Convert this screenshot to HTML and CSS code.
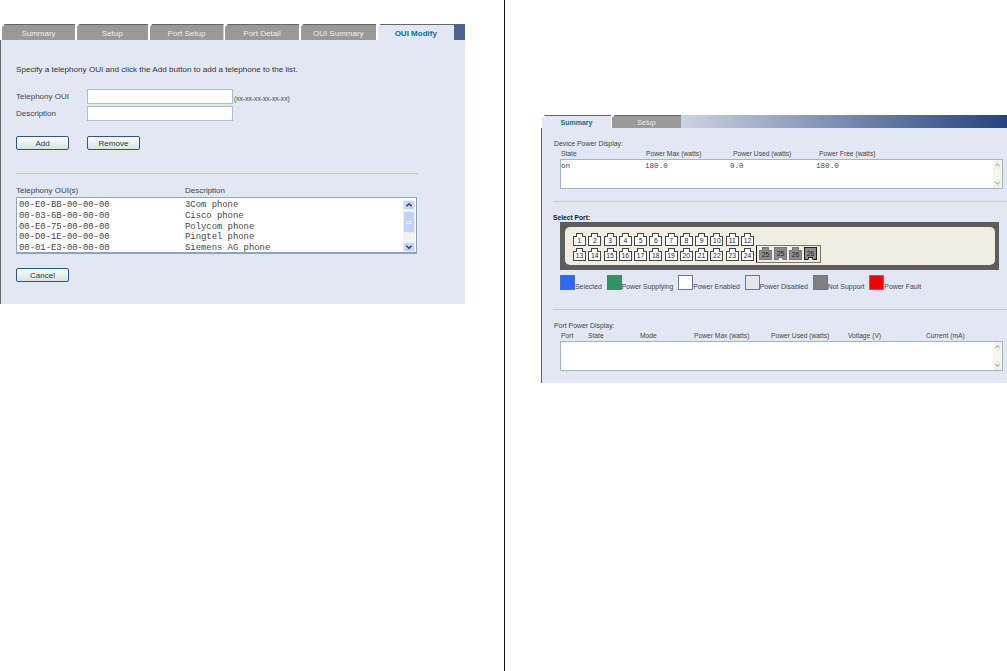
FILE: index.html
```html
<!DOCTYPE html>
<html lang="en">
<head>
    <meta charset="UTF-8">
    <title>PoE and OUI settings</title>
    <link rel="stylesheet" href="styles.css">
</head>
<body>
    <svg class="defs" width="0" height="0">
        <symbol id="arrow-up" viewBox="0 0 9 9"><path d="M1.5 6 4.5 3 7.5 6" fill="none" stroke="currentColor" stroke-width="1.6"/></symbol>
        <symbol id="arrow-down" viewBox="0 0 9 9"><path d="M1.5 3 4.5 6 7.5 3" fill="none" stroke="currentColor" stroke-width="1.6"/></symbol>
    </svg>

    <div class="column column-left">
        <div class="tabs">
            <div class="tab tab-w1">Summary</div>
            <div class="tab tab-w2">Setup</div>
            <div class="tab tab-w3">Port Setup</div>
            <div class="tab tab-w3">Port Detail</div>
            <div class="tab tab-w4">OUI Summary</div>
            <div class="tab tab-w5 active">OUI Modify</div>
            <div class="tabs-fill"></div>
        </div>
        <div class="panel panel-oui">
            <p class="intro">Specify a telephony OUI and click the Add button to add a telephone to the list.</p>
            <div class="form-grid">
                <label>Telephony OUI</label>
                <input type="text">
                <span class="hint">(xx-xx-xx-xx-xx-xx)</span>
                <label>Description</label>
                <input type="text">
            </div>
            <div class="button-row">
                <button>Add</button>
                <button>Remove</button>
            </div>
            <hr class="sep sep-left">
            <div class="list-head">
                <span>Telephony OUI(s)</span>
                <span>Description</span>
            </div>
            <div class="listbox listbox-oui">
                <div class="list-rows">
                    <div class="oui-row"><span>00-E0-BB-00-00-00</span><span>3Com phone</span></div>
                    <div class="oui-row"><span>00-03-6B-00-00-00</span><span>Cisco phone</span></div>
                    <div class="oui-row"><span>00-E0-75-00-00-00</span><span>Polycom phone</span></div>
                    <div class="oui-row"><span>00-D0-1E-00-00-00</span><span>Pingtel phone</span></div>
                    <div class="oui-row"><span>00-01-E3-00-00-00</span><span>Siemens AG phone</span></div>
                </div>
                <div class="scrollbar">
                    <div class="sb-btn"><svg><use href="#arrow-up"/></svg></div>
                    <div class="sb-thumb"><i></i><i></i></div>
                    <div class="sb-track"></div>
                    <div class="sb-btn"><svg><use href="#arrow-down"/></svg></div>
                </div>
            </div>
            <button class="cancel">Cancel</button>
        </div>
    </div>

    <div class="column column-right">
        <div class="tabs tabs-small">
            <div class="tab tab-s active">Summary</div>
            <div class="tab tab-s">Setup</div>
            <div class="tabs-gradient"></div>
        </div>
        <div class="panel panel-power">
            <div class="group-title">Device Power Display:</div>
            <div class="power-head device-cols">
                <span>State</span>
                <span>Power Max (watts)</span>
                <span>Power Used (watts)</span>
                <span>Power Free (watts)</span>
            </div>
            <div class="listbox listbox-power">
                <div class="list-rows">
                    <div class="device-cols mono-row">
                        <span>on</span>
                        <span>180.0</span>
                        <span>0.0</span>
                        <span>180.0</span>
                    </div>
                </div>
                <div class="scrollbar off">
                    <div class="sb-btn"><svg><use href="#arrow-up"/></svg></div>
                    <div class="sb-track"></div>
                    <div class="sb-btn"><svg><use href="#arrow-down"/></svg></div>
                </div>
            </div>
            <hr class="sep sep-top">
            <div class="select-title">Select Port:</div>
            <div class="switch">
                <div class="switch-inner">
                    <div class="port-grid">
                        <div class="port">1</div><div class="port">2</div><div class="port">3</div><div class="port">4</div>
                        <div class="port">5</div><div class="port">6</div><div class="port">7</div><div class="port">8</div>
                        <div class="port">9</div><div class="port">10</div><div class="port">11</div><div class="port">12</div>
                        <div class="port">13</div><div class="port">14</div><div class="port">15</div><div class="port">16</div>
                        <div class="port">17</div><div class="port">18</div><div class="port">19</div><div class="port">20</div>
                        <div class="port">21</div><div class="port">22</div><div class="port">23</div><div class="port">24</div>
                    </div>
                    <div class="uplinks">
                        <div class="port grey">25</div>
                        <div class="port grey down">25</div>
                        <div class="port grey">26</div>
                        <div class="port grey down dark">26</div>
                    </div>
                </div>
            </div>
            <div class="legend">
                <div class="legend-item"><span class="swatch c-selected"></span>Selected</div>
                <div class="legend-item"><span class="swatch c-supply"></span>Power Supplying</div>
                <div class="legend-item"><span class="swatch c-enabled"></span>Power Enabled</div>
                <div class="legend-item"><span class="swatch c-disabled"></span>Power Disabled</div>
                <div class="legend-item"><span class="swatch c-none"></span>Not Support</div>
                <div class="legend-item"><span class="swatch c-fault"></span>Power Fault</div>
            </div>
            <hr class="sep sep-bottom">
            <div class="group-title">Port Power Display:</div>
            <div class="power-head port-cols">
                <span>Port</span>
                <span>State</span>
                <span>Mode</span>
                <span>Power Max (watts)</span>
                <span>Power Used (watts)</span>
                <span>Voltage (V)</span>
                <span>Current (mA)</span>
            </div>
            <div class="listbox listbox-power">
                <div class="list-rows"></div>
                <div class="scrollbar off">
                    <div class="sb-btn"><svg><use href="#arrow-up"/></svg></div>
                    <div class="sb-track"></div>
                    <div class="sb-btn"><svg><use href="#arrow-down"/></svg></div>
                </div>
            </div>
        </div>
    </div>
</body>
</html>
```

FILE: styles.css
```css
* {
    box-sizing: border-box;
}
body {
    margin: 0;
    height: 671px;
    display: flex;
    overflow: hidden;
    background: #fff;
    font-family: "Liberation Sans", Arial, sans-serif;
    font-size: 8px;
    color: #444;
}
.defs {
    position: absolute;
}
.column-left {
    width: 505px;
    height: 671px;
    padding-top: 24px;
    border-right: 1px solid #111;
}
.column-right {
    flex: 1;
    padding: 115px 0 0 36px;
}

/* tabs */
.tabs {
    display: flex;
    height: 16px;
    width: 465px;
    padding-left: 2px;
    gap: 1.5px;
}
.tab {
    height: 16px;
    line-height: 17px;
    text-align: center;
    color: #eee;
    background: #999;
    border-top: 1px solid #666;
    clip-path: polygon(3px 0, 100% 0, 100% 100%, 0 100%, 0 3px);
}
.tab-w1 { width: 73px; }
.tab-w2 { width: 71.5px; }
.tab-w3 { width: 74px; }
.tab-w4 { width: 75.5px; }
.tab-w5 { width: 76.5px; }
.tab.active {
    background: #e1e8f3;
    color: #0f6aa6;
    font-weight: bold;
}
.tabs-fill {
    flex: 1;
    margin-left: -1.5px;
    background: #4a6296;
}
.tabs-small {
    width: 466px;
    height: 13px;
    padding-left: 1px;
    gap: 1px;
}
.tab-s {
    width: 69px;
    height: 13px;
    line-height: 13px;
    font-size: 7px;
}
.tabs-gradient {
    flex: 1;
    margin-left: -1px;
    background: linear-gradient(to right, #ccd3e1, #26437e);
}

/* panels */
.panel {
    background: #e1e8f3;
    border-left: 1px solid #666;
}
.panel-oui {
    width: 465px;
    height: 264px;
    padding: 25px 0 0 15px;
}
.panel-power {
    width: 466px;
    height: 255px;
    padding: 12px 0 0 11px;
    font-size: 6.7px;
}
.intro {
    margin: 0 0 14px;
    line-height: 10px;
    font-size: 8.1px;
    color: #333;
}
.form-grid {
    display: grid;
    grid-template-columns: 71px 146px auto;
    grid-auto-rows: 15px;
    row-gap: 2px;
    align-items: center;
}
.form-grid input {
    width: 146px;
    height: 15px;
    padding: 0 2px;
    border: 1px solid #a5bdd6;
    background: #fff;
}
.hint {
    font-size: 6.7px;
    padding-left: 1px;
    padding-top: 3px;
}
.button-row {
    display: flex;
    gap: 18px;
    margin-top: 15px;
}
button {
    width: 53px;
    height: 14px;
    padding: 0;
    border: 1px solid #235a8c;
    border-radius: 2px;
    background: linear-gradient(#fdfdfd, #dde2de);
    font-family: inherit;
    font-size: 8px;
    color: #333;
}
.sep {
    height: 1px;
    margin: 0;
    border: 0;
    background: #c9ccbb;
}
.sep-left {
    width: 402px;
    margin-top: 23px;
}

/* lists */
.list-head {
    display: grid;
    grid-template-columns: 169px auto;
    margin: 12px 0 1px;
    line-height: 10px;
}
.listbox {
    display: flex;
    background: #fff;
    border: 1px solid #8aa5c2;
}
.listbox-oui {
    width: 401px;
    height: 57px;
    padding: 2px 0 0 2px;
    border-bottom-width: 2px;
}
.list-rows {
    flex: 1;
    font-family: "Liberation Mono", "Courier New", monospace;
    font-size: 8.9px;
    color: #444;
}
.oui-row {
    display: grid;
    grid-template-columns: 166px auto;
    height: 10.8px;
    line-height: 10.8px;
}
.scrollbar {
    width: 12px;
    margin-right: 1px;
    display: flex;
    flex-direction: column;
    background: #f4f4ec;
}
.sb-btn {
    height: 10px;
    background: #c5d5f9;
    border: 1px solid #e8eefc;
    color: #2c3f74;
}
.sb-btn svg {
    display: block;
    width: 10px;
    height: 8px;
}
.sb-thumb {
    height: 22px;
    margin-top: 1px;
    padding-top: 9px;
    background: #c1d1f8;
    border: 1px solid #e8eefc;
}
.sb-thumb i {
    display: block;
    width: 6px;
    height: 1px;
    margin: 0 auto 1px;
    background: #eef3ff;
}
.sb-track {
    flex: 1;
}
.cancel {
    display: block;
    margin: 14px 0 0;
}

/* power tab */
.group-title {
    line-height: 8px;
    padding-left: 1px;
    font-size: 6.9px;
}
.power-head {
    line-height: 8px;
    margin: 2px 0 1px;
}
.device-cols {
    display: grid;
    grid-template-columns: 85px 87px 86px auto;
    padding-left: 8px;
}
.port-cols {
    display: grid;
    grid-template-columns: 27px 52px 54px 77px 77px 78px auto;
    padding-left: 8px;
}
.listbox-power {
    width: 443px;
    height: 30px;
    margin-left: 7px;
    border-color: #9db4cb;
}
.listbox-power .list-rows {
    font-size: 7.6px;
}
.mono-row {
    padding-left: 0;
    margin-top: 2px;
    line-height: 9px;
    grid-template-columns: 84px 85px 86px auto;
}
.scrollbar.off {
    width: 9px;
    margin-right: 0;
    background: #f7f7f2;
}
.scrollbar.off .sb-btn {
    background: #f1f1ea;
    border-color: #f7f7f2;
    color: #b9bdb6;
}
.scrollbar.off .sb-btn svg {
    width: 7px;
}
.sep-top {
    margin-top: 12px;
}
.select-title {
    margin-top: 12px;
    line-height: 8px;
    font-weight: bold;
    color: #222;
}

/* switch faceplate */
.switch {
    width: 439px;
    height: 48px;
    margin: 0 0 0 7px;
    padding: 5px 4px 5px 5px;
    background: #5d5d5d;
}
.switch-inner {
    display: flex;
    align-items: flex-start;
    height: 38px;
    padding: 6px 0 0 8px;
    background: #f0eee1;
    border-radius: 5px;
}
.port-grid {
    display: grid;
    grid-template-columns: repeat(12, 13px);
    column-gap: 2.27px;
    row-gap: 2px;
    width: 181px;
}
.port {
    position: relative;
    width: 13px;
    height: 10px;
    margin-top: 3px;
    border: 1px solid #444;
    background: #fff;
    text-align: center;
    font-size: 6.8px;
    line-height: 8px;
    color: #222;
}
/* pseudo elements are not caught by the * reset, so sizes here are content-box */
.port::before {
    content: "";
    position: absolute;
    top: -4px;
    left: 2px;
    width: 5px;
    height: 3px;
    border: 1px solid #444;
    border-bottom: 0;
    background: #fff;
}
.uplinks {
    display: flex;
    gap: 2px;
    width: 65px;
    height: 18px;
    margin: 12px 0 0 2px;
    padding: 1px 2px 0;
    border: 1px solid #777;
    border-left-color: #111;
}
.port.grey {
    background: #8c8c8c;
    border-color: #777;
}
.port.grey::before {
    background: #8c8c8c;
    border-color: #777;
}
.port.down {
    height: 13px;
    margin-top: 0;
    line-height: 11px;
}
.port.down::before {
    top: auto;
    bottom: -1px;
    left: 3px;
    width: 3px;
    height: 1px;
    border: 1px solid #777;
    border-bottom: 1px solid #f0eee1;
    background: #f0eee1;
}
.port.dark,
.port.dark::before {
    border-color: #222;
}
.port.dark::before {
    border-bottom-color: #f0eee1;
}
.legend {
    display: flex;
    gap: 4.8px;
    height: 15px;
    margin: 5px 0 0 7px;
}
.legend-item {
    display: flex;
    align-items: flex-end;
    line-height: 7px;
    font-size: 6.9px;
}
.swatch {
    width: 15px;
    height: 15px;
    border: 1px solid #68779f;
}
.c-selected { background: #2f68f5; border-color: #4a6ec0; }
.c-supply { background: #2f9462; border-color: #4f7d72; }
.c-enabled { background: #fff; }
.c-disabled { background: #e6e6e6; }
.c-none { background: #808080; }
.c-fault { background: #f40000; }
.sep-bottom {
    margin: 19px 0 12px;
}
```
